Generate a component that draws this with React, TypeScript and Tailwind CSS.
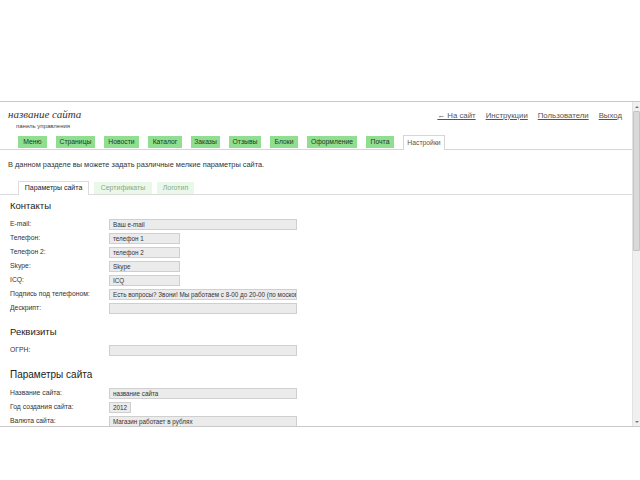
const menuTabs = [
  { label: "Меню", w: "w-[29px]" },
  { label: "Страницы", w: "w-[39px]" },
  { label: "Новости", w: "w-[35px]" },
  { label: "Каталог", w: "w-[34px]" },
  { label: "Заказы", w: "w-[29px]" },
  { label: "Отзывы", w: "w-[32px]" },
  { label: "Блоки", w: "w-[28px]" },
  { label: "Оформление", w: "w-[50px]" },
  { label: "Почта", w: "w-[28px]" },
];

const topLinks = ["← На сайт", "Инструкции", "Пользователи", "Выход"];

type Row = { label: string; value: string; w: string };

const contacts: Row[] = [
  { label: "E-mail:", value: "Ваш e-mail", w: "w-[188px]" },
  { label: "Телефон:", value: "телефон 1", w: "w-[71px]" },
  { label: "Телефон 2:", value: "телефон 2", w: "w-[71px]" },
  { label: "Skype:", value: "Skype", w: "w-[71px]" },
  { label: "ICQ:", value: "ICQ", w: "w-[71px]" },
  {
    label: "Подпись под телефоном:",
    value: "Есть вопросы? Звони! Мы работаем с 8-00 до 20-00 (по московскому времени)",
    w: "w-[188px]",
  },
  { label: "Дескрипт:", value: "", w: "w-[188px]" },
];

const requisites: Row[] = [{ label: "ОГРН:", value: "", w: "w-[188px]" }];

const siteParams: Row[] = [
  { label: "Название сайта:", value: "название сайта", w: "w-[188px]" },
  { label: "Год создания сайта:", value: "2012", w: "w-[22px]" },
  { label: "Валюта сайта:", value: "Магазин работает в рублях", w: "w-[188px]" },
];

function FieldRow({ row }: { row: Row }) {
  return (
    <div className="h-[14px] flex items-center shrink-0">
      <div className="w-[99px] text-[6.8px] text-[#333] whitespace-nowrap">{row.label}</div>
      <div
        className={`${row.w} h-[11px] bg-[#ebebeb] border border-[#cfcfcf] text-[6.3px] leading-[9px] text-[#333] pl-[3px] overflow-hidden whitespace-nowrap`}
      >
        {row.value}
      </div>
    </div>
  );
}

export default function App() {
  return (
    <div className="w-[640px] h-[480px] bg-white flex flex-col overflow-hidden font-['Liberation_Sans',Arial,sans-serif]">
      <div className="h-[101px] shrink-0" />
      <div className="h-[326px] shrink-0 flex border-y border-[#c9c9c9] overflow-hidden">
        <div className="flex-1 flex flex-col overflow-hidden">
          {/* шапка */}
          <div className="flex items-start justify-between pl-[8px] pr-[10px] pt-[5px] h-[32px] shrink-0">
            <div className="flex flex-col">
              <div className="text-[11px] leading-[14px] italic text-[#333] font-['Liberation_Serif',serif]">
                название сайта
              </div>
              <div className="text-[6px] leading-[8px] text-[#444] pl-[8px] mt-[1px]">панель управления</div>
            </div>
            <div className="flex gap-[10px] pt-[3px]">
              {topLinks.map((l) => (
                <a key={l} className="text-[7.8px] text-[#555] underline whitespace-nowrap">
                  {l}
                </a>
              ))}
            </div>
          </div>

          {/* меню */}
          <div className="flex items-end gap-[9px] pl-[18px] border-b border-[#d6d6d6] h-[16px] shrink-0">
            {menuTabs.map((t) => (
              <div
                key={t.label}
                className={`${t.w} h-[12px] mb-[1px] bg-[#90df90] text-[6.8px] text-[#1e3a1e] flex items-center justify-center whitespace-nowrap`}
              >
                {t.label}
              </div>
            ))}
            <div className="w-[42px] h-[15px] -mb-px bg-white border border-b-0 border-[#d6d6d6] text-[6.8px] text-[#555] flex items-center justify-center">
              Настройки
            </div>
          </div>

          <div className="text-[7.4px] text-[#333] pl-[8px] pt-[9px] h-[28px] shrink-0">
            В данном разделе вы можете задать различные мелкие параметры сайта.
          </div>

          {/* подвкладки */}
          <div className="flex items-end gap-[5px] pl-[18px] border-b border-[#dcdcdc] h-[17px] shrink-0">
            <div className="w-[71px] h-[14px] -mb-px bg-white border border-b-0 border-[#dcdcdc] text-[7px] text-[#222] flex items-center justify-center">
              Параметры сайта
            </div>
            <div className="w-[58px] h-[12px] bg-[#e9f8e9] text-[7px] text-[#8aa88a] flex items-center justify-center">
              Сертификаты
            </div>
            <div className="w-[37px] h-[12px] bg-[#e9f8e9] text-[7px] text-[#8aa88a] flex items-center justify-center">
              Логотип
            </div>
          </div>

          <div className="flex flex-col pl-[10px]">
            <div className="text-[9.5px] leading-[14px] text-[#222] mt-[4px] mb-[4px]">Контакты</div>
            {contacts.map((r) => (
              <FieldRow key={r.label} row={r} />
            ))}
            <div className="text-[9.5px] leading-[14px] text-[#222] mt-[10px] mb-[4px]">Реквизиты</div>
            {requisites.map((r) => (
              <FieldRow key={r.label} row={r} />
            ))}
            <div className="text-[10px] leading-[16px] text-[#222] mt-[10px] mb-[3px]">Параметры сайта</div>
            {siteParams.map((r) => (
              <FieldRow key={r.label} row={r} />
            ))}
          </div>
        </div>

        {/* скроллбар */}
        <div className="w-[8px] shrink-0 bg-[#f0f0f0] border-l border-[#e2e2e2] flex flex-col items-center">
          <div className="h-[9px] flex items-center justify-center">
            <div className="w-0 h-0 border-l-[2px] border-r-[2px] border-b-[2px] border-l-transparent border-r-transparent border-b-[#777]" />
          </div>
          <div className="w-[7px] h-[140px] bg-[#d9d9d9] border border-[#c4c4c4] rounded-[1px]" />
          <div className="flex-1" />
          <div className="h-[9px] flex items-center justify-center">
            <div className="w-0 h-0 border-l-[2px] border-r-[2px] border-t-[2px] border-l-transparent border-r-transparent border-t-[#777]" />
          </div>
        </div>
      </div>
    </div>
  );
}
